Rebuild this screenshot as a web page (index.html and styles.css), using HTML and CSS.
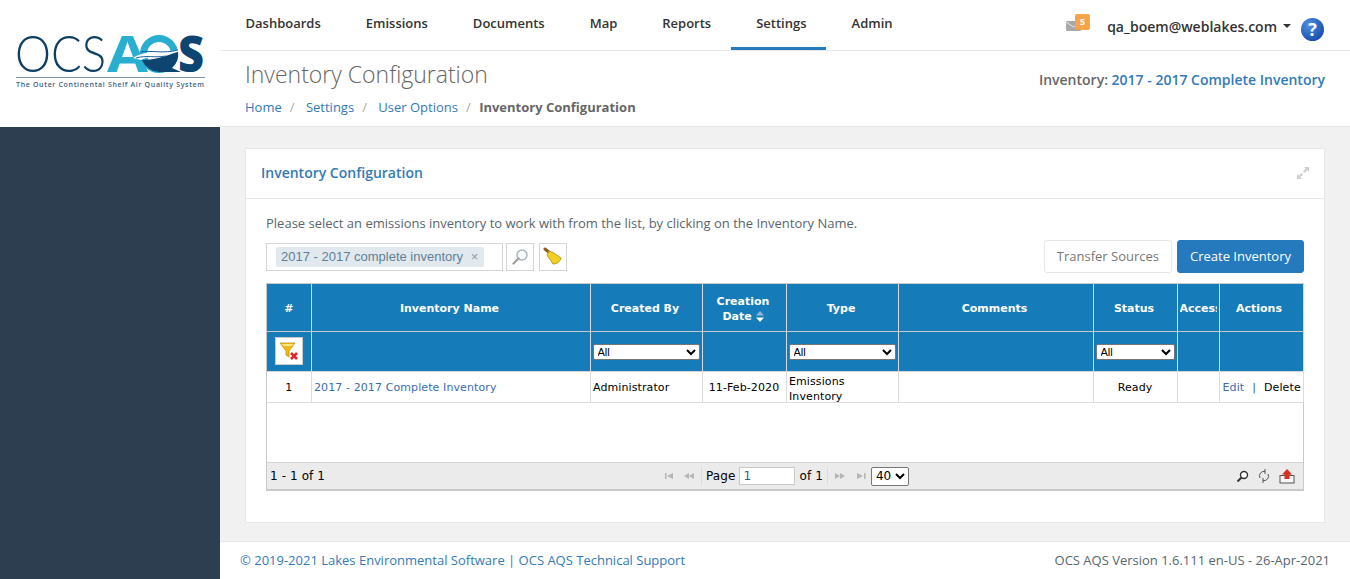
FILE: index.html
```html
<!DOCTYPE html>
<html lang="en">
<head>
  <meta charset="UTF-8">
  <title>Inventory Configuration</title>
  <link rel="stylesheet" href="styles.css">
</head>
<body>

<div class="layout">
  <aside class="sidebar">
    <div class="logo">
      <svg width="220" height="127" viewBox="0 0 220 127">
        <text x="15" y="72" class="logo-ocs" textLength="91" lengthAdjust="spacingAndGlyphs">OCS</text>
        <circle cx="159" cy="54" r="15.500" fill="none" stroke="#2aaed0" stroke-width="7"/>
        <text x="107" y="72" class="logo-a" textLength="41" lengthAdjust="spacingAndGlyphs">A</text>
        <path d="M142 60 C152 60 166 57 178 51 A19 19 0 0 1 172 68 L181 72 H159 A19 19 0 0 1 142 60 Z" fill="#0d4470"/>
        <path d="M133 58 C148 48 165 56 186 47 C170 59 152 54 141 60 Z" fill="#fff"/>
        <path d="M140 52 C152 50 163 54 178 50" fill="none" stroke="#1b5c9e" stroke-width="1"/>
        <path d="M136 58 C146 55 155 58 166 56" fill="none" stroke="#1b5c9e" stroke-width="1"/>
        <text x="178" y="72" class="logo-s" textLength="26" lengthAdjust="spacingAndGlyphs">S</text>
        <line x1="16" y1="77.500" x2="205" y2="77.500" stroke="#7f93a8" stroke-width="1"/>
        <text x="16" y="87" class="logo-tag" textLength="188">The Outer Continental Shelf Air Quality System</text>
      </svg>
    </div>
  </aside>

  <div class="main">
    <header class="topbar">
      <nav class="nav">
        <a href="#">Dashboards</a>
        <a href="#">Emissions</a>
        <a href="#">Documents</a>
        <a href="#">Map</a>
        <a href="#">Reports</a>
        <a href="#" class="active">Settings</a>
        <a href="#">Admin</a>
      </nav>
      <div class="user-area">
        <span class="mail">
          <svg width="15" height="10" viewBox="0 0 15 10"><rect width="15" height="10" rx="1" fill="#a9a9a9"/><path d="M0 1 L7.500 6 L15 1" fill="none" stroke="#e8e8e8" stroke-width="1"/></svg>
          <span class="mail-badge">5</span>
        </span>
        <span class="user-name">qa_boem@weblakes.com</span>
        <span class="caret"></span>
        <span class="help">?</span>
      </div>
    </header>

    <div class="page-head">
      <div>
        <h1>Inventory Configuration</h1>
        <div class="breadcrumb">
          <a href="#">Home</a><span class="sep">/</span>
          <a href="#">Settings</a><span class="sep">/</span>
          <a href="#">User Options</a><span class="sep">/</span>
          <b>Inventory Configuration</b>
        </div>
      </div>
      <div class="current-inv">Inventory: <a href="#">2017 - 2017 Complete Inventory</a></div>
    </div>

    <div class="content">
      <section class="panel">
        <div class="panel-title">
          <span>Inventory Configuration</span>
          <svg width="12" height="12" viewBox="0 0 12 12" fill="#cfcfcf"><path d="M7 0 H12 V5 L10.300 3.300 L7.500 6.100 L5.900 4.500 L8.700 1.700 Z"/><path d="M5 12 H0 V7 L1.700 8.700 L4.500 5.900 L6.100 7.500 L3.300 10.300 Z"/></svg>
        </div>
        <div class="panel-body">
          <p class="hint">Please select an emissions inventory to work with from the list, by clicking on the Inventory Name.</p>

          <div class="toolbar">
            <div class="tag-input"><span class="tag">2017 - 2017 complete inventory <i>×</i></span></div>
            <button class="icon-btn">
              <svg width="18" height="18" viewBox="0 0 18 18"><circle cx="11" cy="7" r="5" fill="#f7fafc" stroke="#a9b2b8" stroke-width="1.400"/><path d="M7.500 10.500 L2.500 15.500" stroke="#a0a0a0" stroke-width="2.400" stroke-linecap="round"/></svg>
            </button>
            <button class="icon-btn">
              <svg width="20" height="20" viewBox="0 0 20 20"><path d="M2 2 L7 6" stroke="#8a5a20" stroke-width="3" stroke-linecap="round"/><path d="M6 4 L11 6 L18 11 C17 15 14 17 10 17 C8 14 6 11 4 8 Z" fill="#f0d020" stroke="#a89010" stroke-width="0.800"/></svg>
            </button>
            <div class="toolbar-right">
              <button class="btn">Transfer Sources</button>
              <button class="btn btn-primary">Create Inventory</button>
            </div>
          </div>

          <div class="grid">
            <table>
              <colgroup>
                <col class="c-num"><col class="c-name"><col class="c-by"><col class="c-date"><col class="c-type"><col class="c-comments"><col class="c-status"><col class="c-access"><col class="c-actions">
              </colgroup>
              <thead>
                <tr class="head-row">
                  <th class="num-head">#</th>
                  <th>Inventory Name</th>
                  <th>Created By</th>
                  <th>Creation<br>Date <span class="sort"><svg width="8" height="11" viewBox="0 0 8 11"><path d="M4 0 L8 4.500 H0 Z" fill="#8fb8d8"/><path d="M4 11 L8 6.500 H0 Z" fill="#fff"/></svg></span></th>
                  <th>Type</th>
                  <th>Comments</th>
                  <th>Status</th>
                  <th><div class="clip">Access</div></th>
                  <th>Actions</th>
                </tr>
                <tr class="filter-row">
                  <th>
                    <span class="clear-filter">
                      <svg width="20" height="20" viewBox="0 0 20 20"><path d="M1 2 H16 L10 10 V16 L7 14 V10 Z" fill="#f5b915" stroke="#b58a10" stroke-width="0.700"/><path d="M2 3 H15 L12 5 H5 Z" fill="#fde68a"/><path d="M12 12 L18 18 M18 12 L12 18" stroke="#e0262b" stroke-width="2.600"/></svg>
                    </span>
                  </th>
                  <th></th>
                  <th><select class="f-by"><option>All</option></select></th>
                  <th></th>
                  <th><select class="f-type"><option>All</option></select></th>
                  <th></th>
                  <th><select class="f-status"><option>All</option></select></th>
                  <th></th>
                  <th></th>
                </tr>
              </thead>
              <tbody>
                <tr>
                  <td class="center">1</td>
                  <td><a href="#">2017 - 2017 Complete Inventory</a></td>
                  <td>Administrator</td>
                  <td class="center">11-Feb-2020</td>
                  <td class="wrap-cell"><div class="wrap-text">Emissions Inventory</div></td>
                  <td></td>
                  <td class="center">Ready</td>
                  <td></td>
                  <td class="actions"><a href="#">Edit</a><span class="pipe">|</span>Delete</td>
                </tr>
              </tbody>
            </table>
            <div class="grid-empty"></div>
            <div class="pager">
              <div class="pager-info">1 - 1 of 1</div>
              <div class="pager-mid">
                <svg width="34" height="8" viewBox="0 0 34 8" fill="#b5b5b5"><rect x="1" y="1" width="1.500" height="6"/><path d="M9 1 V7 L3 4 Z"/><path d="M25 1 V7 L20 4 Z M30 1 V7 L25 4 Z"/></svg>
                <span class="pager-sep"></span>
                <span>Page</span>
                <input class="page-input" type="text" value="1">
                <span>of 1</span>
                <span class="pager-sep pager-sep-right"></span>
                <svg width="34" height="8" viewBox="0 0 34 8" fill="#b5b5b5"><path d="M1 1 V7 L6 4 Z M6 1 V7 L11 4 Z"/><path d="M23 1 V7 L29 4 Z"/><rect x="30" y="1" width="1.500" height="6"/></svg>
                <select class="page-size"><option>40</option></select>
              </div>
              <div class="pager-tools">
                <svg width="13" height="13" viewBox="0 0 13 13"><circle cx="8" cy="5" r="3.500" fill="#fff" stroke="#333" stroke-width="1.400"/><path d="M5.500 7.500 L1.500 11.500" stroke="#333" stroke-width="2"/></svg>
                <svg width="12" height="14" viewBox="0 0 12 14" fill="none" stroke="#555" stroke-width="1"><path d="M2 9 A4.500 4.500 0 0 1 7 2.500"/><path d="M10 5 A4.500 4.500 0 0 1 5 11.500"/><path d="M7 0 V5 M5 9 V14"/></svg>
                <svg width="16" height="15" viewBox="0 0 16 15"><rect x="1" y="6.500" width="14" height="7.500" fill="#f5f5f5" stroke="#555"/><path d="M8 0 L13 5.500 H10.500 V10 H5.500 V5.500 H3 Z" fill="#d9301f"/></svg>
              </div>
            </div>
          </div>
        </div>
      </section>
    </div>

    <footer class="footer">
      <div>© 2019-2021 Lakes Environmental Software | OCS AQS Technical Support</div>
      <div class="version">OCS AQS Version 1.6.111 en-US - 26-Apr-2021</div>
    </footer>
  </div>
</div>

</body>
</html>
```

FILE: styles.css
```css
* {
  box-sizing: border-box;
}

html, body {
  margin: 0;
  padding: 0;
  height: 100%;
}

body {
  font-family: 'Open Sans', sans-serif;
  font-size: 13px;
  color: #58666e;
  background-color: #f1f1f1;
  overflow: hidden;
}

a {
  color: #337ab7;
  text-decoration: none;
}

.layout {
  display: flex;
  height: 579px;
}

/* sidebar */
.sidebar {
  width: 220px;
  flex-shrink: 0;
  background-color: #2c3e50;
}

.logo {
  height: 127px;
  background-color: #fff;
}

.logo svg {
  display: block;
}

.logo-ocs {
  font-family: 'Lato', sans-serif;
  font-weight: 300;
  font-size: 51px;
  fill: #0e3f63;
}

.logo-a {
  font-family: 'Open Sans', sans-serif;
  font-weight: 700;
  font-size: 50px;
  fill: #2aaed0;
}

.logo-s {
  font-family: 'Open Sans', sans-serif;
  font-weight: 800;
  font-size: 50px;
  fill: #0d4470;
}

.logo-tag {
  font-family: 'Open Sans', sans-serif;
  font-weight: 600;
  font-size: 7px;
  fill: #3f617f;
}

/* main column */
.main {
  flex: 1;
  min-width: 0;
  display: flex;
  flex-direction: column;
}

.topbar {
  height: 51px;
  background-color: #fff;
  border-bottom: 1px solid #e7e7e7;
  display: flex;
  justify-content: space-between;
  padding: 0 26px 0 3px;
}

.nav {
  display: flex;
}

.nav a {
  padding: 14px 22.500px 0;
  height: 50px;
  color: #333;
  font-weight: 600;
  font-size: 13px;
}

.nav a.active {
  padding: 14px 19px 0 25px;
  margin: 0 3.500px 0 -2.500px;
  border-bottom: 3px solid #2579bd;
}

.user-area {
  display: flex;
  align-items: center;
  padding-top: 2px;
}

.mail {
  position: relative;
  display: flex;
  margin-right: 26px;
}

.mail-badge {
  position: absolute;
  left: 9px;
  top: -7px;
  width: 15px;
  height: 16px;
  border-radius: 2px;
  background-color: #f7a54a;
  color: #fff;
  font-size: 9px;
  font-weight: 700;
  line-height: 16px;
  text-align: center;
}

.user-name {
  font-size: 14px;
  font-weight: 600;
  color: #333;
}

.caret {
  width: 0;
  height: 0;
  margin: 0 10px 0 6px;
  border-left: 4px solid transparent;
  border-right: 4px solid transparent;
  border-top: 4px solid #333;
}

.help {
  width: 23px;
  height: 23px;
  margin-top: 6px;
  border-radius: 50%;
  background: radial-gradient(circle at 35% 30%, #4f8fe0, #1a4fb0 75%);
  color: #fff;
  font-size: 18px;
  font-weight: 700;
  line-height: 23px;
  text-align: center;
}

.page-head {
  height: 76px;
  background-color: #fff;
  border-bottom: 1px solid #e7e7e7;
  padding: 9px 25px 0;
  display: flex;
  justify-content: space-between;
}

h1 {
  margin: 0;
  font-size: 23px;
  font-weight: 300;
  line-height: 28px;
  color: #666;
}

.breadcrumb {
  margin-top: 10px;
  font-size: 13px;
  line-height: 18px;
}

.breadcrumb .sep {
  margin: 0 8px;
  color: #aaa;
}

.breadcrumb b {
  margin-left: -3px;
  color: #666;
}

.current-inv {
  margin-top: 10px;
  font-size: 14px;
  font-weight: 600;
  color: #666;
}

.content {
  height: 414px;
  padding: 21px 25px 0;
}

.panel {
  height: 375px;
  background-color: #fff;
  border: 1px solid #e7e7e7;
}

.panel-title {
  height: 50px;
  padding: 0 15px 2px;
  border-bottom: 1px solid #e7e7e7;
  display: flex;
  justify-content: space-between;
  align-items: center;
  font-size: 14px;
  font-weight: 600;
  color: #337ab7;
}

.panel-body {
  padding: 14px 20px 0;
}

.hint {
  margin: 0;
  font-size: 13px;
  line-height: 20px;
  color: #58666e;
}

.toolbar {
  display: flex;
  align-items: center;
  margin-top: 7px;
  height: 33px;
}

.tag-input {
  width: 237px;
  height: 28px;
  border: 1px solid #d5d5d5;
  padding: 3px 9px;
  margin-right: 3px;
}

.tag {
  display: inline-block;
  height: 20px;
  padding: 0 6px 0 5px;
  background-color: #e1e9ef;
  border-radius: 2px;
  font-family: 'Liberation Sans', sans-serif;
  font-size: 13px;
  line-height: 19px;
  color: #5f7f95;
  white-space: nowrap;
}

.tag i {
  font-style: normal;
  color: #999;
  margin-left: 4px;
}

.icon-btn {
  width: 28px;
  height: 28px;
  margin-right: 5px;
  padding: 0;
  border: 1px solid #d5d5d5;
  background-color: #fff;
  display: flex;
  align-items: center;
  justify-content: center;
}

.toolbar-right {
  margin-left: auto;
  display: flex;
  gap: 5px;
}

.btn {
  height: 33px;
  padding: 0 12px 2px;
  border: 1px solid #e7e7e7;
  border-radius: 3px;
  background-color: #fff;
  font-family: 'Open Sans', sans-serif;
  font-size: 13px;
  color: #777;
}

.btn-primary {
  background-color: #2579bd;
  border-color: #2579bd;
  color: #fff;
}

/* grid */
.grid {
  margin-top: 10px;
  width: 1038px;
  height: 208px;
  border: 1px solid #c9c9c9;
  border-bottom-width: 2px;
  font-family: 'DejaVu Sans', sans-serif;
  font-size: 11px;
  color: #000;
  display: flex;
  flex-direction: column;
}

table {
  width: 1036px;
  table-layout: fixed;
  border-collapse: collapse;
}

.c-num { width: 44px; }
.c-name { width: 279px; }
.c-by { width: 112px; }
.c-date { width: 84px; }
.c-type { width: 112px; }
.c-comments { width: 195px; }
.c-status { width: 84px; }
.c-access { width: 42px; }
.c-actions { width: 84px; }

th {
  background-color: #167bb9;
  color: #fff;
  font-size: 11px;
  font-weight: 700;
  text-align: center;
  padding: 0;
  border-right: 1px solid #d9d9d9;
}

.head-row th {
  height: 47px;
  padding: 3px 2px 0 0;
  line-height: 15px;
  border-bottom: 1px solid #c9c9c9;
}

.head-row th.num-head {
  padding-right: 0;
}

.head-row th:last-child {
  padding-right: 4px;
}

.filter-row th {
  height: 40px;
  border-bottom: 1px solid #d9d9d9;
}

.clip {
  overflow: hidden;
  white-space: nowrap;
  margin-left: 2px;
  text-align: left;
}

.sort svg {
  vertical-align: -2px;
}

.clear-filter {
  display: inline-flex;
  align-items: center;
  justify-content: center;
  width: 28px;
  height: 28px;
  background-color: #fff;
  border: 1px solid #c9c9c9;
  vertical-align: middle;
}

select {
  display: block;
  height: 16px;
  margin: 2px auto 0;
  padding: 0;
  font-family: 'Liberation Sans', sans-serif;
  font-size: 11px;
  background-color: #fff;
  border: 1px solid #767676;
  border-radius: 2px;
  color: #000;
}

.f-by, .f-type {
  width: 107px;
}

.f-status {
  width: 79px;
}

td {
  height: 31px;
  padding: 2px 2.500px 0;
  line-height: 15px;
  letter-spacing: 0.100px;
  border-right: 1px solid #dcdcdc;
  border-bottom: 1px solid #dcdcdc;
  overflow: hidden;
}

td a {
  color: #3a6db0;
}

td.center {
  padding: 2px 0 0;
  text-align: center;
}

td.wrap-cell {
  padding-top: 0;
}

.wrap-text {
  height: 28px;
  margin-top: 2px;
}

td.actions {
  padding-left: 3px;
  white-space: nowrap;
}

.pipe {
  margin: 0 8px;
  color: #2a5f8f;
}

.grid-empty {
  flex: 1;
  border-bottom: 1px solid #d5d5d5;
}

.pager {
  height: 26px;
  background-color: #ebebeb;
  display: flex;
  align-items: center;
  padding: 0 8px 0 3px;
  font-size: 12px;
  letter-spacing: 0.100px;
}

.pager-info {
  width: 394px;
}

.pager-mid {
  display: flex;
  align-items: center;
  gap: 3px;
}

.pager-sep {
  width: 1px;
  height: 18px;
  margin-right: 1px;
  background-color: #dcdcdc;
}

.pager-sep-right {
  margin: 0 3px 0 1px;
}

.page-input {
  width: 56px;
  height: 18px;
  margin: 0 1px 0 1px;
  padding: 0 3px;
  border: 1px solid #c9c9c9;
  background-color: #fff;
  font-family: 'DejaVu Sans', sans-serif;
  font-size: 12px;
  color: #2a5f8f;
}

.page-size {
  width: 38px;
  height: 19px;
  margin: 0;
  font-family: 'DejaVu Sans', sans-serif;
  font-size: 12px;
}

.pager-tools {
  margin-left: auto;
  display: flex;
  align-items: center;
  gap: 9px;
}

.footer {
  flex: 1;
  background-color: #fff;
  border-top: 1px solid #e7e7e7;
  display: flex;
  justify-content: space-between;
  align-items: center;
  padding: 0 20px 2px;
  font-size: 13px;
  color: #337ab7;
}

.version {
  color: #58666e;
}
```
